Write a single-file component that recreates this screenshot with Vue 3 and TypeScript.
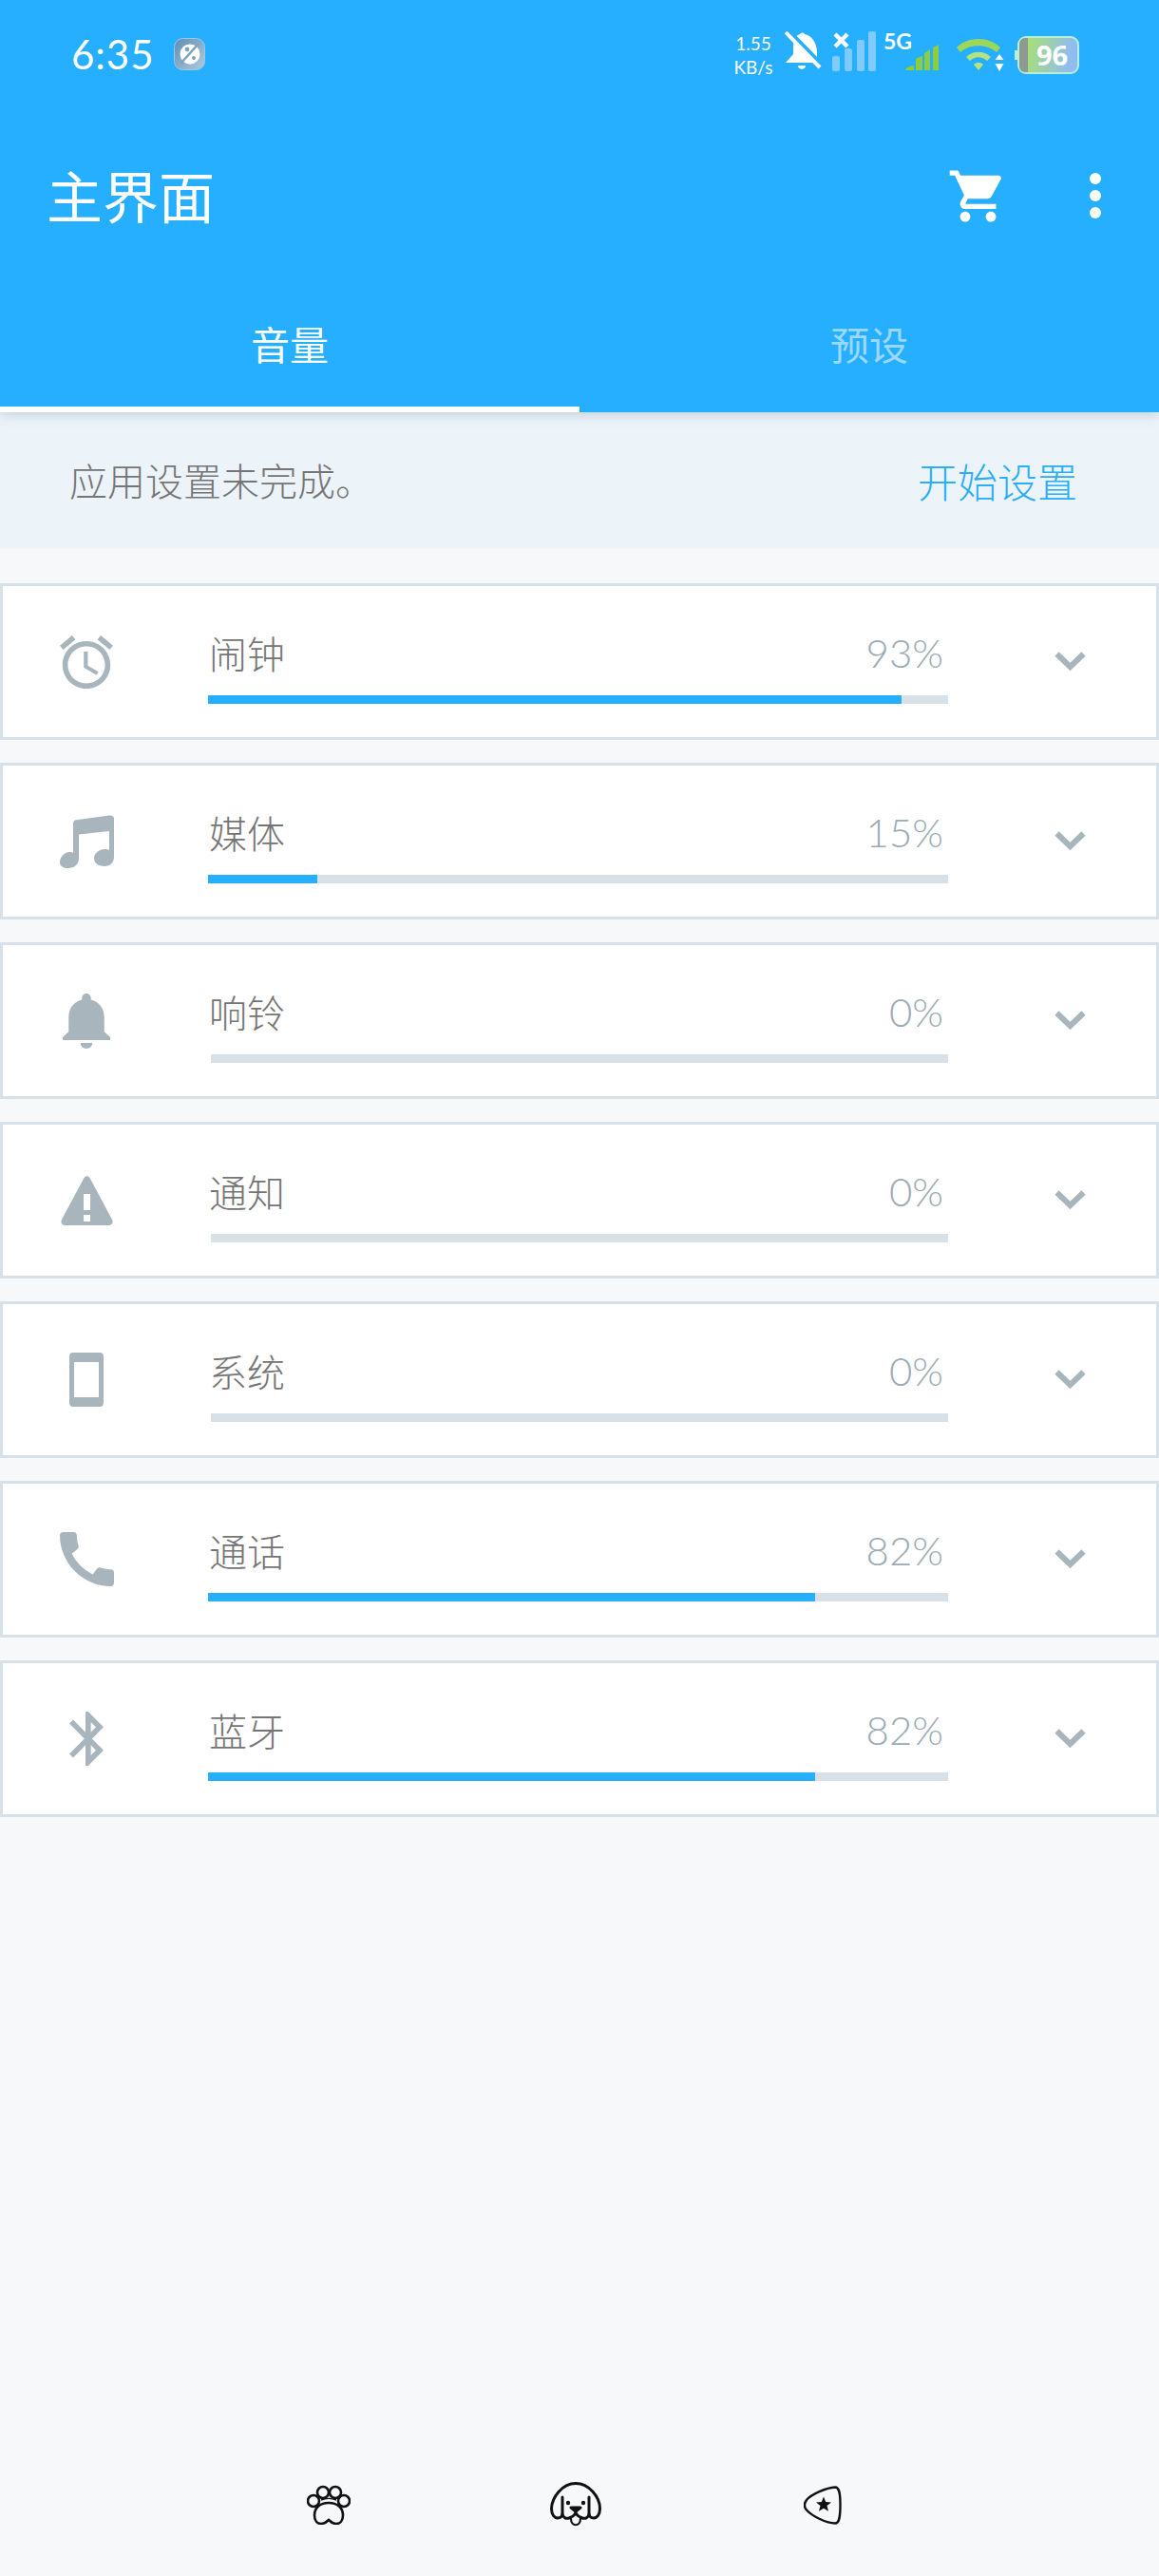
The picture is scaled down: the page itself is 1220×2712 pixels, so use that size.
<script setup lang="ts">
interface Channel {
  name: string;
  percent: number;
  fill: number;
  viewBox: string;
  width: number;
  height: number;
  path: string;
}

const channels: Channel[] = [
  {
    name: "闹钟",
    percent: 93,
    fill: 93.7,
    viewBox: "2 1.86 20 20.14",
    width: 56,
    height: 56,
    path: "M22 5.72l-4.6-3.86-1.29 1.53 4.6 3.86L22 5.72zM7.88 3.39L6.6 1.86 2 5.71l1.29 1.53 4.59-3.85zM12.5 8H11v6l4.75 2.85.75-1.23-4-2.37V8zM12 4c-4.97 0-9 4.03-9 9s4.03 9 9 9 9-4.03 9-9-4.03-9-9-9zm0 16c-3.87 0-7-3.13-7-7s3.13-7 7-7 7 3.13 7 7-3.13 7-7 7z",
  },
  {
    name: "媒体",
    percent: 15,
    fill: 14.8,
    viewBox: "0 0 57 56",
    width: 57,
    height: 56,
    path: "M14 9C14 6.5 15.5 5.5 17 5.200L52 .6C55 .2 57 1.500 57 4V44C57 50 53 54 47 54C40 54 36 50 36 46C36 40 42 36 47 36C49 36 50.500 36.300 52 37V17L20 20.500V46C20 52 15 56 9 56C4 56 0 54 0 50C0 44 5 39 10 39C12 39 13 39.300 14 40Z",
  },
  {
    name: "响铃",
    percent: 0,
    fill: 0,
    viewBox: "4 2.5 16 19.5",
    width: 50,
    height: 58,
    path: "M12 22c1.1 0 2-.9 2-2h-4c0 1.1.89 2 2 2zm6-6v-5c0-3.07-1.64-5.64-4.5-6.32V4c0-.83-.67-1.5-1.5-1.5s-1.5.67-1.5 1.5v.68C7.63 5.36 6 7.92 6 11v5l-2 2v1h16v-1l-2-2z",
  },
  {
    name: "通知",
    percent: 0,
    fill: 0,
    viewBox: "0 0 55 52",
    width: 55,
    height: 52,
    path: "M24.5 2C26 -.5 29 -.5 30.5 2L54 46C55.5 49 54 52 51 52H4C1 52 -.5 49 1 46ZM24 19V36H31V19ZM24 41V48H31V41Z",
  },
  {
    name: "系统",
    percent: 0,
    fill: 0,
    viewBox: "0 0 36 57",
    width: 36,
    height: 57,
    path: "M4 0H32C34.5 0 36 1.5 36 4V53C36 55.5 34.5 57 32 57H4C1.5 57 0 55.5 0 53V4C0 1.5 1.5 0 4 0ZM5 10V47H31V10Z",
  },
  {
    name: "通话",
    percent: 82,
    fill: 82,
    viewBox: "3 3 18 18",
    width: 57,
    height: 57,
    path: "M20.01 15.38c-1.23 0-2.42-.2-3.53-.56-.35-.12-.74-.03-1.01.24l-1.57 1.97c-2.83-1.35-5.48-3.9-6.89-6.83l1.95-1.66c.27-.28.35-.67.24-1.02-.37-1.11-.56-2.3-.56-3.53 0-.54-.45-.99-.99-.99H4.19C3.65 3 3 3.24 3 3.99 3 13.28 10.73 21 20.01 21c.71 0 .99-.63.99-1.18v-3.45c0-.54-.45-.99-.99-.99z",
  },
  {
    name: "蓝牙",
    percent: 82,
    fill: 82,
    viewBox: "5 2 12.71 20",
    width: 36,
    height: 57,
    path: "M17.71 7.71L12 2h-1v7.59L6.41 5 5 6.41 10.59 12 5 17.59 6.41 19 11 14.41V22h1l5.71-5.71-4.3-4.29 4.3-4.29zM13 5.83l1.88 1.88L13 9.59V5.83zm1.88 10.46L13 18.17v-3.76l1.88 1.88z",
  },
];
</script>

<template>
  <div class="page">
    <header class="appbar">
      <div class="statusbar">
        <div class="status-left">
          <span class="clock">6:35</span>
          <svg class="planet" width="33" height="34" viewBox="0 0 33 34">
            <defs>
              <linearGradient id="planetBg" x1="0" y1="0" x2="1" y2="1">
                <stop offset="0" stop-color="#5f8db3" />
                <stop offset="1" stop-color="#aecbdd" />
              </linearGradient>
            </defs>
            <rect x=".5" y=".5" width="32" height="33" rx="9" fill="url(#planetBg)" stroke="#9cc6e6" />
            <circle cx="17" cy="17" r="10.5" fill="#fff" />
            <path d="M7 27L26 6" stroke="#7fa3c0" stroke-width="2.6" />
            <circle cx="14" cy="12" r="2.4" fill="#7fa3c0" />
            <circle cx="21" cy="21" r="2" fill="#7fa3c0" />
          </svg>
        </div>
        <div class="status-right">
          <div class="speed">
            <span>1.55</span>
            <span>KB/s</span>
          </div>
          <svg class="st-bell" width="39" height="43" viewBox="0 0 39 43">
            <path d="M16 3C10 5 9 10 9 15V24L1 33H34V22C34 12 28 4 21 3C20 1 17 1 16 3Z" fill="#fff" />
            <path d="M14 36H22C22 41 14 41 14 36Z" fill="#fff" />
            <path d="M3 0L39 37" stroke="#26aeff" stroke-width="7" />
            <path d="M1 1L37 38" stroke="#fff" stroke-width="4" />
          </svg>
          <svg class="st-signal" width="46" height="42" viewBox="0 0 46 42">
            <path d="M3 3L16 16M16 3L3 16" stroke="#fff" stroke-width="4.4" />
            <rect x="0" y="26" width="8" height="16" rx="2" fill="#7fcbff" />
            <rect x="13" y="18" width="8" height="24" rx="2" fill="#7fcbff" />
            <rect x="26" y="9" width="8" height="33" rx="2" fill="#7fcbff" />
            <rect x="38" y="0" width="8" height="42" rx="2" fill="#7fcbff" />
          </svg>
          <div class="st-five">
            <span>5G</span>
            <svg width="36" height="27" viewBox="0 0 36 27">
              <path d="M1 27V26Q5 22 10 22V27ZM12 27V15Q15 13 19 12V27ZM21 27V9Q24 7 27 5V27ZM30 27V3L36 0V27Z" fill="#8ccc3f" />
            </svg>
          </div>
          <svg class="st-wifi" width="51" height="37" viewBox="0 0 51 37">
            <path d="M1 12C13 0 35 0 47 12L43 17C33 8 15 8 5 17Z" fill="#9bd85a" />
            <path d="M11 22C18 15 30 15 37 22L33 26C27 21 21 21 15 26Z" fill="#b3e37f" />
            <path d="M19 30C22 27 26 27 29 30L24 36Z" fill="#b3e37f" />
            <path d="M46 19L50.500 25H41.500ZM46 37L41.500 29H50.500Z" fill="#fff" />
          </svg>
          <div class="battery">
            <span class="battery-end"></span>
            <span class="battery-used"></span>
            <span class="battery-level">96</span>
          </div>
        </div>
      </div>
      <div class="toolbar">
        <h1 class="title">主界面</h1>
        <div class="actions">
          <svg class="cart" width="65" height="65" viewBox="0 0 24 24">
            <path
              fill="#fff"
              d="M7 18c-1.100 0-1.990.9-1.990 2S5.900 22 7 22s2-.9 2-2-.9-2-2-2zM1 2v2h2l3.600 7.590-1.350 2.450c-.16.280-.25.610-.25.960 0 1.100.9 2 2 2h12v-2H7.420c-.14 0-.25-.11-.25-.25l.03-.12.900-1.630h7.450c.750 0 1.410-.41 1.750-1.030l3.580-6.490c.080-.14.120-.31.120-.48 0-.55-.45-1-1-1H5.210l-.94-2H1zm16 16c-1.100 0-1.990.9-1.990 2s.890 2 1.990 2 2-.9 2-2-.9-2-2-2z"
            />
          </svg>
          <div class="dots"><i></i><i></i><i></i></div>
        </div>
      </div>
      <nav class="tabs">
        <div class="tab active">音量</div>
        <div class="tab">预设</div>
      </nav>
    </header>

    <section class="setup">
      <span class="setup-text">应用设置未完成。</span>
      <span class="setup-link">开始设置</span>
    </section>

    <ul class="channels">
      <li v-for="channel in channels" :key="channel.name" class="channel">
        <div class="channel-icon">
          <svg :width="channel.width" :height="channel.height" :viewBox="channel.viewBox" preserveAspectRatio="none">
            <path :d="channel.path" fill="#a8b5bd" fill-rule="evenodd" />
          </svg>
        </div>
        <div class="channel-body">
          <div class="channel-head">
            <span class="channel-name">{{ channel.name }}</span>
            <span class="channel-percent">{{ channel.percent }}%</span>
          </div>
          <div class="track" :class="{ empty: channel.percent === 0 }">
            <div class="fill" :style="{ width: channel.fill + '%' }"></div>
          </div>
        </div>
        <div class="channel-more">
          <svg width="33" height="21" viewBox="0 0 33 21">
            <path d="M2.500 2.500L16.500 16L30.500 2.500" fill="none" stroke="#a8b5bd" stroke-width="6" />
          </svg>
        </div>
      </li>
    </ul>

    <footer class="bottom-nav">
      <div class="nav-item">
        <svg width="46" height="42" viewBox="0 0 46 42" fill="none" stroke="#111" stroke-width="2.600">
          <circle cx="17" cy="8" r="6" />
          <circle cx="30" cy="8" r="6" />
          <circle cx="7" cy="17" r="6" />
          <circle cx="39" cy="17" r="6" />
          <path d="M23 19C14 19 8 24 8 32C8 38 11 41 15 41C19 41 21 39 23 37C25 39 27 41 31 41C35 41 38 38 38 32C38 24 32 19 23 19Z" />
          <path d="M15 16C20 14 26 14 31 16" stroke-width="1.400" />
        </svg>
      </div>
      <div class="nav-item">
        <svg width="54" height="48" viewBox="0 0 54 48" fill="none" stroke="#111" stroke-width="3" stroke-linecap="round">
          <path d="M27 1.500C13 1.500 2 16 1.500 28C1.500 35 5 38 8 38C11 38 13 36 13 33V16" />
          <path d="M27 1.500C41 1.500 52.500 16 52.500 28C52.500 35 49 38 46 38C43 38 41 36 41 33V16" />
          <path d="M13 34C14 38 17 39 20 38C23 37 25 36 27 33C29 36 31 37 34 38C37 39 40 38 41 34" />
          <path d="M22 38.500C22 47.500 32 47.500 32 38.500" stroke-width="2.200" />
          <path d="M27 30V33" />
          <path d="M22 27H32L27 31Z" fill="#111" stroke-linejoin="round" />
          <circle cx="19" cy="22" r="2.200" fill="#111" stroke="none" />
          <circle cx="35" cy="22" r="2.200" fill="#111" stroke="none" />
        </svg>
      </div>
      <div class="nav-item">
        <svg width="40" height="41" viewBox="0 0 40 41" fill="none" stroke="#111" stroke-width="2.400">
          <path d="M33 1.500C24 2 8 9 3 15C0 19 .5 23 3.500 26C9 32 24 39.500 33 39.500C37.500 39.500 38.500 33 38.500 20C38.500 8 37.500 1.500 33 1.500Z" />
          <polygon points="21,11.500 23.200,17 29,17.400 24.500,21.100 26,26.800 21,23.700 16,26.800 17.500,21.100 13,17.400 18.800,17" fill="#111" stroke="none" />
        </svg>
      </div>
    </footer>
  </div>
</template>

<style scoped>
.page {
  display: flex;
  flex-direction: column;
  height: 2712px;
  overflow: hidden;
  background: #f6f8fa;
  font-family: "Noto Sans CJK SC", "Noto Sans", sans-serif;
}

.appbar {
  position: relative;
  z-index: 1;
  height: 434px;
  display: flex;
  flex-direction: column;
  background: #26aeff;
  color: #fff;
  box-shadow: 0 3px 12px rgba(60, 80, 100, 0.22);
}

.statusbar {
  height: 114px;
  display: flex;
  justify-content: space-between;
  align-items: flex-start;
  padding: 0 84px 0 75px;
}

.status-left {
  display: flex;
  align-items: center;
  gap: 20px;
  margin-top: 33px;
}

.clock {
  font-family: Lato, sans-serif;
  font-weight: 400;
  font-size: 42px;
  line-height: 48px;
  letter-spacing: 1px;
}

.status-right {
  position: relative;
  display: flex;
  align-items: flex-start;
  margin-top: 33px;
}

.speed {
  display: flex;
  flex-direction: column;
  align-items: center;
  width: 48px;
  font-family: Lato, sans-serif;
  font-size: 19px;
  line-height: 25px;
  margin-right: 9px;
}

.st-bell {
  margin-right: 11px;
}

.st-signal {
  margin-right: 8px;
  margin-top: 0;
}

.st-five {
  width: 58px;
  height: 44px;
  position: relative;
  font-family: Lato, sans-serif;
  font-weight: 700;
  font-size: 23px;
  line-height: 20px;
  margin-right: 18px;
}

.st-five svg {
  position: absolute;
  left: 22px;
  top: 14px;
}

.st-wifi {
  margin-top: 5px;
  margin-right: 14px;
}

.battery {
  position: relative;
  width: 65px;
  height: 40px;
  margin-top: 5px;
  border: 2px solid #b7efd4;
  border-radius: 9px;
  box-sizing: border-box;
  background: linear-gradient(100deg, #a7df76 15%, #8fbdf0 85%);
  text-align: center;
}

.battery-end {
  position: absolute;
  left: -5px;
  top: 13px;
  width: 3px;
  height: 10px;
  background: #b7efd4;
}

.battery-used {
  position: absolute;
  left: 0;
  top: 0;
  bottom: 0;
  width: 9px;
  border-radius: 6px 0 0 6px;
  background: #8d9a92;
}

.battery-level {
  position: relative;
  display: block;
  padding-left: 8px;
  font-family: "Open Sans", sans-serif;
  font-weight: 700;
  font-size: 29px;
  line-height: 35px;
}

.toolbar {
  height: 201px;
  display: flex;
  justify-content: space-between;
  align-items: flex-start;
  padding: 52px 61px 0 49px;
  box-sizing: border-box;
}

.title {
  margin: 0;
  font-weight: 400;
  font-size: 59px;
  line-height: 78px;
}

.actions {
  display: flex;
  align-items: flex-start;
  gap: 85px;
  padding-top: 8px;
}

.cart {
  display: block;
}

.dots {
  display: flex;
  flex-direction: column;
  gap: 6px;
  margin-top: 8px;
}

.dots i {
  display: block;
  width: 12px;
  height: 12px;
  border-radius: 50%;
  background: #fff;
}

.tabs {
  flex: 1;
  display: flex;
}

.tab {
  flex: 1;
  text-align: center;
  font-size: 41px;
  line-height: 56px;
  padding-top: 18px;
  color: rgba(255, 255, 255, 0.55);
  border-bottom: 6px solid transparent;
}

.tab.active {
  color: #fff;
  border-bottom-color: #fff;
}

.setup {
  height: 144px;
  flex-shrink: 0;
  display: flex;
  justify-content: space-between;
  align-items: center;
  padding: 0 86px 2px 73px;
  box-sizing: border-box;
  background: #ecf4fa;
  font-weight: 300;
}

.setup-text {
  font-size: 40px;
  color: #757575;
}

.setup-link {
  font-size: 42px;
  color: #2aaef5;
}

.channels {
  list-style: none;
  margin: 36px 0 0;
  padding: 0;
  display: flex;
  flex-direction: column;
  gap: 24px;
}

.channel {
  display: flex;
  height: 165px;
  box-sizing: border-box;
  border: 3px solid #d8e1e7;
  background: #fff;
}

.channel-icon {
  width: 176px;
  flex-shrink: 0;
  display: flex;
  align-items: center;
  justify-content: center;
}

.channel-icon svg {
  display: block;
}

.channel-body {
  width: 779px;
  margin-left: 40px;
  padding-top: 42px;
}

.channel-head {
  display: flex;
  justify-content: space-between;
  align-items: center;
  height: 56px;
  padding: 0 5px 0 1px;
}

.channel-name {
  font-weight: 300;
  font-size: 40px;
  color: #757575;
}

.channel-percent {
  font-family: Lato, sans-serif;
  font-weight: 300;
  font-size: 42px;
  color: #9dabb4;
}

.track {
  height: 9px;
  margin-top: 17px;
  background: #d8e1e7;
}

.track.empty {
  margin-left: 3px;
}

.fill {
  height: 100%;
  background: #26aeff;
}

.channel-more {
  flex: 1;
  display: flex;
  align-items: center;
  padding-left: 112px;
}

.channel-more svg {
  display: block;
}

.bottom-nav {
  margin-top: auto;
  display: grid;
  grid-template-columns: repeat(3, 260px);
  justify-content: center;
  padding: 0 9px 52px 0;
}

.nav-item {
  display: flex;
  justify-content: center;
  align-items: center;
  height: 46px;
}
</style>

<style>
html,
body {
  margin: 0;
  background: #f6f8fa;
}
</style>
